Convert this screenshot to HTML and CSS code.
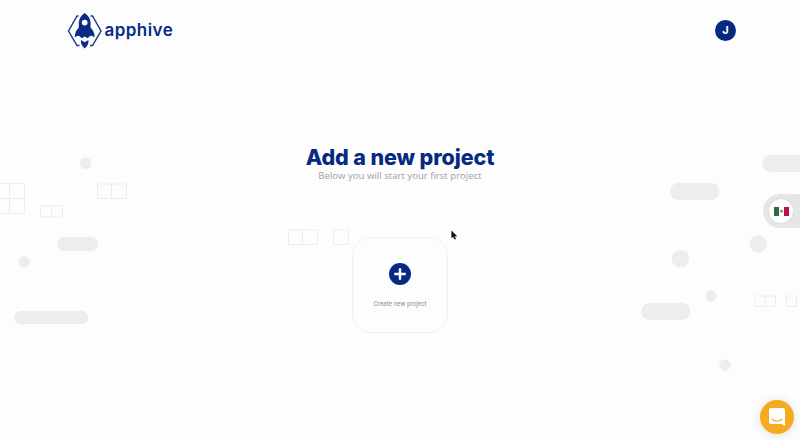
FILE: index.html
```html
<!DOCTYPE html>
<html lang="en">
<head>
<meta charset="utf-8">
<title>Apphive</title>
<link rel="stylesheet" href="styles.css">
</head>
<body>
<svg class="backdrop" viewBox="0 0 800 440" aria-hidden="true">
  <g class="blobs">
    <circle cx="85.700" cy="163.300" r="5.700"/>
    <circle cx="24.300" cy="262" r="5.700"/>
    <rect x="57" y="237" width="41" height="14" rx="7"/>
    <rect x="14" y="311" width="74.500" height="13" rx="6.500"/>
    <rect x="762.500" y="154.700" width="60" height="17.300" rx="8.600"/>
    <rect x="670" y="183" width="49.500" height="17" rx="8.500"/>
    <rect x="641" y="303" width="49.500" height="17" rx="8.500"/>
    <circle cx="758.300" cy="244" r="8.800"/>
    <circle cx="680.400" cy="258.700" r="8.800"/>
    <circle cx="711" cy="296" r="5.700"/>
    <circle cx="725" cy="365" r="5.700"/>
  </g>
  <g class="grid-lines">
    <path d="M-5 183.500H24.500V213.500H-5M-5 198.500H24.500M9.500 183.500V213.500"/>
    <path d="M97.500 184H126.500V198.500H97.500ZM111.500 184V198.500"/>
    <path d="M40.500 206H62.500V217H40.500ZM51.500 206V217"/>
    <path d="M288.500 230H317.500V244.500H288.500ZM302.500 230V244.500"/>
    <path d="M333.500 230H348.500V244.500H333.500Z"/>
    <path d="M755 296H775.500V306.500H755ZM765 296V306.500M786.500 296H796.500V306.500H786.500Z"/>
  </g>
</svg>

<header class="topbar">
  <a class="brand">
    <svg class="brand-mark" viewBox="0 0 36 38" aria-hidden="true">
      <path class="hex" d="M11.500 4H10L1.500 19L10 33.500H12.500M23.500 4H25.500L34 19L25.500 33.500H23"/>
      <path class="ship" fill-rule="evenodd" d="M17.700 1C14.200 3.300 11.800 6.700 11.800 11C11.800 13 12 14.700 11.600 16C9.500 18 8 20.500 7.700 25.300C10.300 23.400 11.800 23.200 13 24.500L14.700 26.200L17.700 24.400L20.700 26.200L22.400 24.500C23.600 23.200 25.100 23.400 27.700 25.300C27.400 20.500 25.900 18 23.800 16C23.400 14.700 23.600 13 23.600 11C23.600 6.700 21.200 3.300 17.700 1ZM17.700 7.700A2.900 2.900 0 1 1 17.700 13.500A2.900 2.900 0 1 1 17.700 7.700Z"/>
      <path class="ship" d="M14 28L17.700 30.300L21.400 28C22 31.300 20.500 34 17.700 36.500C14.900 34 13.400 31.300 14 28Z"/>
    </svg>
    <span class="brand-name">apphive</span>
  </a>
  <div class="avatar">J</div>
</header>

<main class="content">
  <h1 class="title">Add a new project</h1>
  <p class="subtitle">Below you will start your first project</p>
  <button class="card">
    <svg class="plus" viewBox="0 0 22 22" aria-hidden="true"><circle cx="11" cy="11" r="11"/><path d="M11 5.300V16.700M5.300 11H16.700"/></svg>
    <span class="card-label">Create new project</span>
  </button>
</main>

<div class="language">
  <div class="flag-disc">
    <svg class="flag" viewBox="0 0 15 9"><path fill="#fff" d="M0 0H15V9H0Z"/><path fill="#2b6b45" d="M0 0H5V9H0Z"/><path fill="#b9133f" d="M10 0H15V9H10Z"/><path fill="#8a6a50" d="M6 3.500L7.500 2.700L9 4L8.300 5.600H6.800Z"/></svg>
  </div>
</div>

<div class="chat">
  <svg class="chat-icon" viewBox="0 0 16 18"><path fill="#fff" d="M2 0H14Q16 0 16 2V18L12.500 16H2Q0 16 0 14V2Q0 0 2 0Z"/><path class="smile" d="M3 11.300Q8 15 13 11.300"/></svg>
</div>

<svg class="cursor" viewBox="0 0 7 10"><path d="M.4 .4V8.300L2.200 6.700L3.500 9.600L5 8.900L3.800 6.200H6.300Z"/></svg>
</body>
</html>
```

FILE: styles.css
```css
* {
  box-sizing: border-box;
}

body {
  position: relative;
  width: 800px;
  height: 440px;
  margin: 0;
  overflow: hidden;
  background: #fdfdfe;
  font-family: "Open Sans", sans-serif;
}

.backdrop {
  position: absolute;
  inset: 0;
  width: 800px;
  height: 440px;
}

.blobs {
  fill: #ededee;
}

.grid-lines {
  fill: none;
  stroke: #ebedeb;
}

.topbar {
  position: relative;
  display: flex;
  align-items: center;
  justify-content: space-between;
  height: 61px;
  padding: 0 64px 0 66.500px;
}

.brand {
  display: flex;
  align-items: center;
  gap: 2px;
  color: #082b86;
}

.brand-mark {
  width: 36px;
  height: 38px;
}

.hex {
  fill: none;
  stroke: #173885;
  stroke-width: 1.4;
}

.ship {
  fill: #082b86;
}

.brand-name {
  font: 600 17px/24px Inter, sans-serif;
  letter-spacing: 0.45px;
  margin-top: -1px;
}

.avatar {
  width: 21px;
  height: 21px;
  border-radius: 50%;
  background: #062a82;
  color: #fff;
  font: 700 11px/21px Inter, sans-serif;
  text-align: center;
}

.content {
  position: relative;
  display: flex;
  flex-direction: column;
  align-items: center;
  padding-top: 84px;
}

.title {
  margin: 0;
  color: #062a82;
  font: 800 21.5px/24px Inter, sans-serif;
  letter-spacing: -0.1px;
  white-space: nowrap;
}

.subtitle {
  margin: 1px 0 0;
  color: #a0a0a2;
  font: 400 9.6px/12px "Open Sans", sans-serif;
  white-space: nowrap;
}

.card {
  display: flex;
  flex-direction: column;
  align-items: center;
  gap: 14px;
  width: 96px;
  height: 96px;
  margin-top: 55px;
  padding: 25px 0 0;
  border: 1px solid #eff0f0;
  border-radius: 19px;
  background: #fdfdfe;
}

.plus {
  flex: none;
  width: 22px;
  height: 22px;
  fill: #062a82;
}

.plus path {
  fill: none;
  stroke: #fff;
  stroke-width: 2.4;
}

.card-label {
  color: #929294;
  font: 400 6.4px/10px Roboto, sans-serif;
  white-space: nowrap;
}

.language {
  position: absolute;
  top: 194px;
  right: 0;
  display: flex;
  align-items: center;
  width: 37px;
  height: 34px;
  padding-left: 6px;
  border-radius: 17px 0 0 17px;
  background: #e6e6e7;
}

.flag-disc {
  display: flex;
  align-items: center;
  justify-content: center;
  width: 24px;
  height: 24px;
  border-radius: 50%;
  background: #fff;
  box-shadow: 0 0 1px #8888;
}

.flag {
  width: 15px;
  height: 9px;
}

.chat {
  position: absolute;
  top: 400px;
  left: 760px;
  display: flex;
  align-items: center;
  justify-content: center;
  width: 34px;
  height: 34px;
  border-radius: 50%;
  background: #f4ac1e;
  box-shadow: 0 1px 10px 1px #0000001a;
}

.chat-icon {
  width: 16px;
  height: 18px;
}

.smile {
  fill: none;
  stroke: #f4ac1e;
  stroke-width: 1.1;
  stroke-linecap: round;
}

.cursor {
  position: absolute;
  top: 230px;
  left: 450.5px;
  width: 7px;
  height: 10px;
  fill: #111;
}
```
